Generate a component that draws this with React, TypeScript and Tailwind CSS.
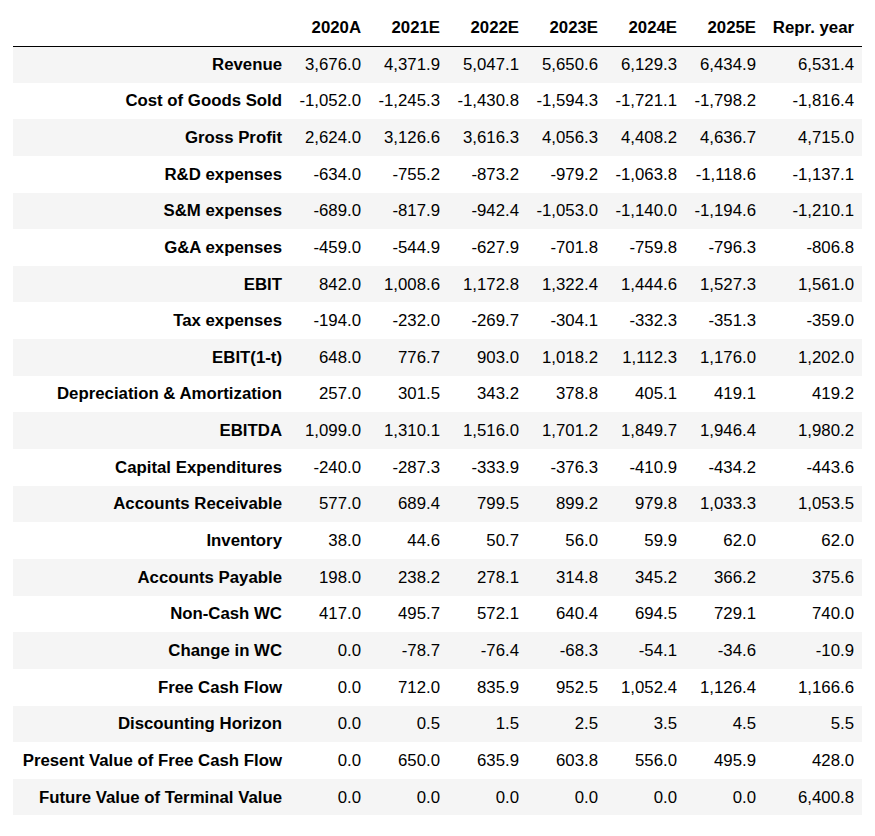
const columns = ["2020A", "2021E", "2022E", "2023E", "2024E", "2025E", "Repr. year"];

const rows: [string, string[]][] = [
  ["Revenue", ["3,676.0", "4,371.9", "5,047.1", "5,650.6", "6,129.3", "6,434.9", "6,531.4"]],
  ["Cost of Goods Sold", ["-1,052.0", "-1,245.3", "-1,430.8", "-1,594.3", "-1,721.1", "-1,798.2", "-1,816.4"]],
  ["Gross Profit", ["2,624.0", "3,126.6", "3,616.3", "4,056.3", "4,408.2", "4,636.7", "4,715.0"]],
  ["R&D expenses", ["-634.0", "-755.2", "-873.2", "-979.2", "-1,063.8", "-1,118.6", "-1,137.1"]],
  ["S&M expenses", ["-689.0", "-817.9", "-942.4", "-1,053.0", "-1,140.0", "-1,194.6", "-1,210.1"]],
  ["G&A expenses", ["-459.0", "-544.9", "-627.9", "-701.8", "-759.8", "-796.3", "-806.8"]],
  ["EBIT", ["842.0", "1,008.6", "1,172.8", "1,322.4", "1,444.6", "1,527.3", "1,561.0"]],
  ["Tax expenses", ["-194.0", "-232.0", "-269.7", "-304.1", "-332.3", "-351.3", "-359.0"]],
  ["EBIT(1-t)", ["648.0", "776.7", "903.0", "1,018.2", "1,112.3", "1,176.0", "1,202.0"]],
  ["Depreciation & Amortization", ["257.0", "301.5", "343.2", "378.8", "405.1", "419.1", "419.2"]],
  ["EBITDA", ["1,099.0", "1,310.1", "1,516.0", "1,701.2", "1,849.7", "1,946.4", "1,980.2"]],
  ["Capital Expenditures", ["-240.0", "-287.3", "-333.9", "-376.3", "-410.9", "-434.2", "-443.6"]],
  ["Accounts Receivable", ["577.0", "689.4", "799.5", "899.2", "979.8", "1,033.3", "1,053.5"]],
  ["Inventory", ["38.0", "44.6", "50.7", "56.0", "59.9", "62.0", "62.0"]],
  ["Accounts Payable", ["198.0", "238.2", "278.1", "314.8", "345.2", "366.2", "375.6"]],
  ["Non-Cash WC", ["417.0", "495.7", "572.1", "640.4", "694.5", "729.1", "740.0"]],
  ["Change in WC", ["0.0", "-78.7", "-76.4", "-68.3", "-54.1", "-34.6", "-10.9"]],
  ["Free Cash Flow", ["0.0", "712.0", "835.9", "952.5", "1,052.4", "1,126.4", "1,166.6"]],
  ["Discounting Horizon", ["0.0", "0.5", "1.5", "2.5", "3.5", "4.5", "5.5"]],
  ["Present Value of Free Cash Flow", ["0.0", "650.0", "635.9", "603.8", "556.0", "495.9", "428.0"]],
  ["Future Value of Terminal Value", ["0.0", "0.0", "0.0", "0.0", "0.0", "0.0", "6,400.8"]],
];

export default function App() {
  return (
    <div className="min-h-screen bg-white pt-[9px] pl-[13px] text-black font-['Liberation_Sans',Arial,sans-serif] text-[16.8px]">
      <table className="table-fixed border-collapse w-[849px]">
        <colgroup>
          <col className="w-[277px]" />
          <col className="w-[79px]" />
          <col className="w-[79px]" />
          <col className="w-[79px]" />
          <col className="w-[79px]" />
          <col className="w-[79px]" />
          <col className="w-[79px]" />
          <col className="w-[98px]" />
        </colgroup>
        <thead>
          <tr className="h-[37px] border-b border-black">
            <th className="px-2 text-right font-bold"></th>
            {columns.map((c) => (
              <th key={c} className="px-2 text-right font-bold whitespace-nowrap">{c}</th>
            ))}
          </tr>
        </thead>
        <tbody>
          {rows.map(([label, values], i) => (
            <tr key={label} className={i % 2 === 0 ? "h-[36.65px] bg-[#f5f5f5]" : "h-[36.65px] bg-white"}>
              <th className="px-2 text-right font-bold whitespace-nowrap">{label}</th>
              {values.map((v, j) => (
                <td key={j} className="px-2 text-right whitespace-nowrap">{v}</td>
              ))}
            </tr>
          ))}
        </tbody>
      </table>
    </div>
  );
}
